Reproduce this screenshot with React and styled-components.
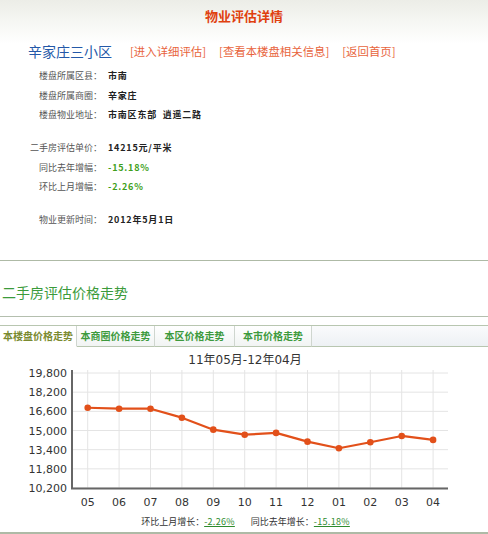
import React from "react";
import styled, { createGlobalStyle } from "styled-components";

const Global = createGlobalStyle`
  html, body { margin: 0; padding: 0; background: #fff; }
  body { font-family: "Noto Sans CJK SC", "DejaVu Sans", sans-serif; }
`;

const Page = styled.div`
  width: 488px;
  height: 534px;
  overflow: hidden;
  background: #fff;
`;

const Overview = styled.section`
  background: linear-gradient(to bottom, #ecede7 0px, #f5f6f2 20px, #ffffff 44px);
  border-bottom: 1px solid #aebaa6;
  padding-bottom: 30.5px;
`;

const Header = styled.h1`
  margin: 0;
  height: 32px;
  line-height: 32px;
  text-align: center;
  font-size: 13px;
  font-weight: bold;
  color: #e0400e;
`;

const NameRow = styled.div`
  display: flex;
  align-items: center;
  gap: 13px;
  height: 22px;
  margin-top: 8px;
  padding-left: 28px;
`;

const EstateName = styled.span`
  font-size: 14px;
  color: #2458a8;
  margin-right: 5px;
`;

const NavLink = styled.a`
  font-size: 11.4px;
  color: #e8643c;
  text-decoration: none;
  cursor: pointer;
`;

const InfoList = styled.div`
  margin-top: 4px;
  display: flex;
  flex-direction: column;
`;

const InfoGroup = styled.div`
  & + & {
    margin-top: 13.5px;
  }
`;

const InfoRow = styled.div`
  display: grid;
  grid-template-columns: 102px 1fr;
  column-gap: 6px;
  height: 19.5px;
  align-items: center;
  font-size: 9px;
`;

const Label = styled.span`
  text-align: right;
  color: #555;
`;

const Value = styled.span`
  font-weight: bold;
  letter-spacing: 0.8px;
  white-space: pre;
  color: ${(p) => (p.$tone === "green" ? "#3f9f1c" : "#222")};
`;

const TrendHeading = styled.h2`
  margin: 0;
  height: 56px;
  box-sizing: border-box;
  padding: 22px 0 0 2px;
  line-height: 18px;
  font-size: 14px;
  font-weight: normal;
  color: #3b9b3b;
  border-bottom: 1px solid #b4bfae;
`;

const TabBar = styled.div`
  display: flex;
  margin-top: 8px;
  border-top: 1px solid #b8c6b0;
`;

const Tab = styled.div`
  width: ${(p) => p.$w}px;
  box-sizing: border-box;
  height: 21px;
  line-height: 20px;
  text-align: center;
  font-size: 10px;
  font-weight: bold;
  color: ${(p) => (p.$active ? "#7a8a30" : "#3d9a3d")};
  background: ${(p) => (p.$active ? "#fff" : "linear-gradient(#ffffff, #f1f4f3)")};
  border-right: 1px solid #cfd6cf;
  border-bottom: 1px solid ${(p) => (p.$active ? "#fff" : "#b8c6b0")};
`;

const TabFill = styled.div`
  flex: 1;
  height: 21px;
  box-sizing: border-box;
  background: linear-gradient(#fafbfc, #edf1f4);
  border-bottom: 1px solid #b8c6b0;
`;

const ChartTitle = styled.div`
  margin-top: 3px;
  height: 16px;
  line-height: 20px;
  text-align: center;
  font-family: "DejaVu Sans", "Noto Sans CJK SC", sans-serif;
  font-size: 12px;
  color: #333;
  padding-left: 2px;
`;

const ChartSvg = styled.svg`
  display: block;
`;

const Stats = styled.div`
  height: 20px;
  line-height: 20px;
  text-align: center;
  font-size: 9px;
  color: #333;
  border-bottom: 2px solid #aebaa6;
  padding-left: 3px;
`;

const StatItem = styled.span`
  & + & {
    margin-left: 16px;
  }
`;

const StatLink = styled.a`
  color: #2e8b2e;
  text-decoration: underline;
  letter-spacing: 0.3px;
`;

const months = ["05", "06", "07", "08", "09", "10", "11", "12", "01", "02", "03", "04"];
const prices = [16900, 16820, 16820, 16070, 15070, 14650, 14800, 14070, 13520, 14020, 14544, 14215];
const yTicks = [19800, 18200, 16600, 15000, 13400, 11800, 10200];

const X0 = 87.7;
const DX = 31.4;
const BASE = 122;
const yOf = (v) => BASE - ((v - 10200) * 115) / 9600;

function PriceChart() {
  const pts = prices.map((v, i) => [X0 + i * DX, yOf(v)]);
  return (
    <ChartSvg width="488" height="146" viewBox="0 0 488 146">
      {yTicks.map((t) => (
        <line key={"h" + t} x1="72" x2="448" y1={yOf(t)} y2={yOf(t)} stroke="#e4e4e4" strokeWidth="1" />
      ))}
      {months.map((m, i) => (
        <line key={"v" + m} x1={X0 + i * DX} x2={X0 + i * DX} y1="4" y2={BASE} stroke="#e4e4e4" strokeWidth="1" />
      ))}
      <line x1="72" x2="72" y1="4" y2={BASE + 1} stroke="#666" strokeWidth="2" />
      <line x1="71" x2="448" y1={BASE + 0.5} y2={BASE + 0.5} stroke="#666" strokeWidth="2" />
      {yTicks.map((t) => (
        <text
          key={"t" + t}
          x="67"
          y={yOf(t) + 4}
          textAnchor="end"
          fontFamily="DejaVu Sans, sans-serif"
          fontSize="11"
          fill="#333"
        >
          {t.toLocaleString("en-US")}
        </text>
      ))}
      {months.map((m, i) => (
        <text
          key={"m" + m}
          x={X0 + i * DX}
          y={BASE + 18}
          textAnchor="middle"
          fontFamily="DejaVu Sans, sans-serif"
          fontSize="11"
          fill="#333"
        >
          {m}
        </text>
      ))}
      <polyline
        points={pts.map((p) => p.join(",")).join(" ")}
        fill="none"
        stroke="#e2501a"
        strokeWidth="2.2"
        strokeLinejoin="round"
      />
      {pts.map(([x, y], i) => (
        <circle key={"c" + i} cx={x} cy={y} r="3.3" fill="#e2501a" />
      ))}
    </ChartSvg>
  );
}

const info = [
  [
    ["楼盘所属区县：", "市南"],
    ["楼盘所属商圈：", "辛家庄"],
    ["楼盘物业地址：", "市南区东部  逍遥二路"],
  ],
  [
    ["二手房评估单价：", "14215元/平米"],
    ["同比去年增幅：", "-15.18%", "green"],
    ["环比上月增幅：", "-2.26%", "green"],
  ],
  [["物业更新时间：", "2012年5月1日"]],
];

const tabs = [
  { label: "本楼盘价格走势", w: 77, active: true },
  { label: "本商圈价格走势", w: 78 },
  { label: "本区价格走势", w: 80 },
  { label: "本市价格走势", w: 77 },
];

export default function App() {
  return (
    <Page>
      <Global />
      <Overview>
        <Header>物业评估详情</Header>
        <NameRow>
          <EstateName>辛家庄三小区</EstateName>
          <NavLink>[进入详细评估]</NavLink>
          <NavLink>[查看本楼盘相关信息]</NavLink>
          <NavLink>[返回首页]</NavLink>
        </NameRow>
        <InfoList>
          {info.map((group, gi) => (
            <InfoGroup key={gi}>
              {group.map(([l, v, tone]) => (
                <InfoRow key={l}>
                  <Label>{l}</Label>
                  <Value $tone={tone}>{v}</Value>
                </InfoRow>
              ))}
            </InfoGroup>
          ))}
        </InfoList>
      </Overview>
      <TrendHeading>二手房评估价格走势</TrendHeading>
      <TabBar>
        {tabs.map((t) => (
          <Tab key={t.label} $w={t.w} $active={t.active}>
            {t.label}
          </Tab>
        ))}
        <TabFill />
      </TabBar>
      <ChartTitle>11年05月-12年04月</ChartTitle>
      <PriceChart />
      <Stats>
        <StatItem>
          环比上月增长：<StatLink>-2.26%</StatLink>
        </StatItem>
        <StatItem>
          同比去年增长：<StatLink>-15.18%</StatLink>
        </StatItem>
      </Stats>
    </Page>
  );
}
